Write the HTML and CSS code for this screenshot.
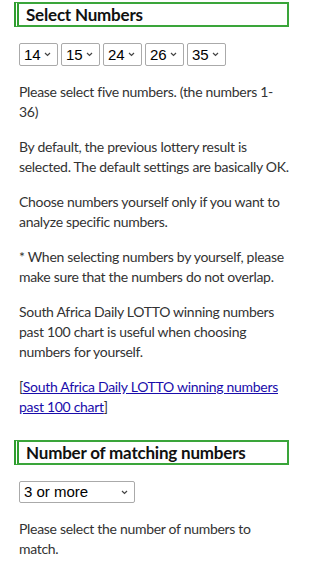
FILE: index.html
```html
<!DOCTYPE html>
<html lang="en">
<head>
<meta charset="utf-8">
<title>Select Numbers</title>
<link rel="stylesheet" href="styles.css">
</head>
<body>
<main class="page">
  <section class="block">
    <h2 class="heading">Select Numbers</h2>
    <div class="body">
      <div class="picks">
        <select class="pick"><option>14</option></select>
        <select class="pick"><option>15</option></select>
        <select class="pick"><option>24</option></select>
        <select class="pick"><option>26</option></select>
        <select class="pick"><option>35</option></select>
      </div>
      <p class="text">Please select five numbers. (the numbers 1-<br>36)</p>
      <p class="text">By default, the previous lottery result is selected. The default settings are basically OK.</p>
      <p class="text">Choose numbers yourself only if you want to analyze specific numbers.</p>
      <p class="text">* When selecting numbers by yourself, please make sure that the numbers do not overlap.</p>
      <p class="text">South Africa Daily LOTTO winning numbers past 100 chart is useful when choosing numbers for yourself.</p>
      <p class="text">[<a class="link" href="#">South Africa Daily LOTTO winning numbers past 100 chart</a>]</p>
    </div>
  </section>
  <section class="block block-second">
    <h2 class="heading">Number of matching numbers</h2>
    <div class="body">
      <select class="match"><option>3 or more</option></select>
      <p class="text">Please select the number of numbers to match.</p>
    </div>
  </section>
</main>
</body>
</html>
```
FILE: styles.css
```css
html, body {
  margin: 0;
  padding: 0;
  background: #ffffff;
}
.page {
  width: 300px;
  box-sizing: border-box;
  padding: 2px 11px 0 14px;
  font-family: Lato, "Noto Sans", sans-serif;
  color: #333333;
}
.heading {
  margin: 0;
  height: 25px;
  box-sizing: border-box;
  border: 2px solid #3aa53a;
  border-left: 5px double #2f9e2f;
  padding: 0 0 0 7px;
  font-size: 17px;
  line-height: 21px;
  font-weight: 700;
  letter-spacing: -0.2px;
  color: #111111;
}
.body {
  padding-left: 5px;
}
.picks {
  display: flex;
  gap: 3px;
  margin-top: 16px;
  margin-bottom: 16px;
}
.pick, .match {
  -webkit-appearance: none;
  appearance: none;
  box-sizing: border-box;
  margin: 0;
  padding: 0 0 0 4px;
  font-family: "Liberation Sans", Arial, sans-serif;
  font-size: 15px;
  line-height: 20px;
  color: #000;
  border: 1px solid #aaaaaa;
  border-radius: 2px;
  background-color: #ffffff;
  background-image: url("data:image/svg+xml;utf8,<svg xmlns='http://www.w3.org/2000/svg' width='7' height='5' viewBox='0 0 7 5'><path d='M1 1 L3.5 3.5 L6 1' fill='none' stroke='%23444' stroke-width='1.2'/></svg>");
  background-repeat: no-repeat;
  background-size: 7px 5px;
}
.pick {
  width: 39px;
  height: 23px;
  background-position: right 6px center;
}
.match {
  display: block;
  width: 116px;
  height: 22px;
  margin-top: 16px;
  margin-bottom: 16px;
  background-position: right 6px center;
}
.text {
  margin: 0 0 15px;
  font-size: 14px;
  line-height: 20px;
  letter-spacing: -0.3px;
}
.link {
  color: #1a0dab;
}
.block-second {
  margin-top: 23px;
}
.block-second .text {
  margin: 0;
}
```
